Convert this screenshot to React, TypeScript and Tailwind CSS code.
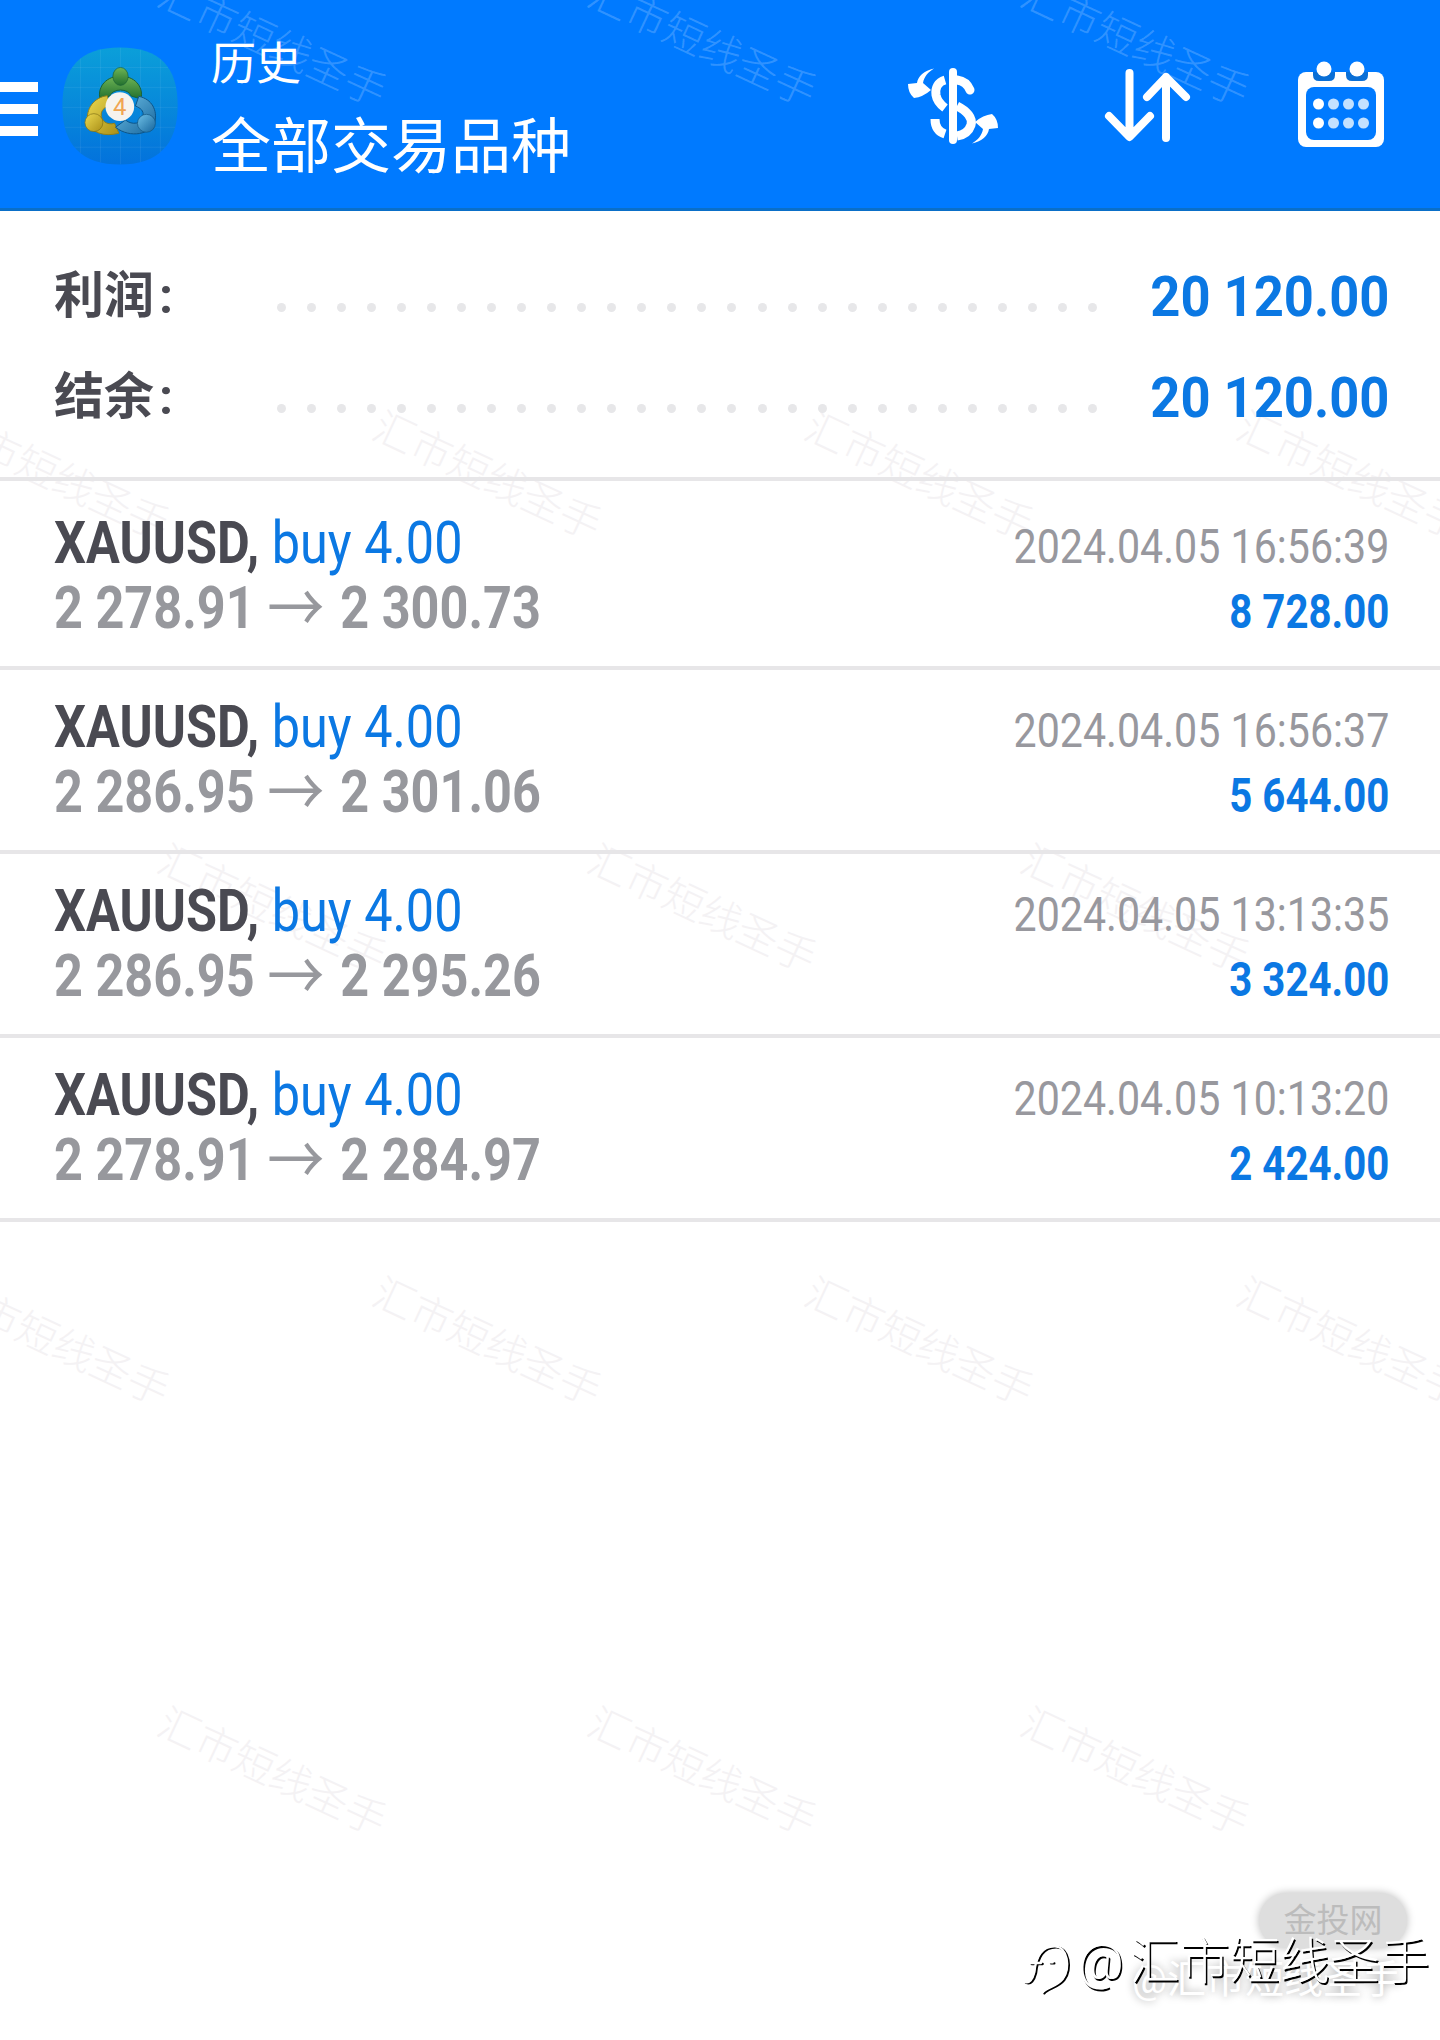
import React from 'react';

const trades = [
  { open: '2 278.91', close: '2 300.73', time: '2024.04.05 16:56:39', profit: '8 728.00' },
  { open: '2 286.95', close: '2 301.06', time: '2024.04.05 16:56:37', profit: '5 644.00' },
  { open: '2 286.95', close: '2 295.26', time: '2024.04.05 13:13:35', profit: '3 324.00' },
  { open: '2 278.91', close: '2 284.97', time: '2024.04.05 10:13:20', profit: '2 424.00' }
];

const summary = [
  { label: '利润', value: '20 120.00' },
  { label: '结余', value: '20 120.00' }
];

// centre points of the repeated watermark
const marks = [
  [272, 44], [702, 44], [1135, 44],
  [55, 477], [487, 477], [919, 477], [1351, 477],
  [272, 910], [702, 910], [1135, 910],
  [55, 1343], [487, 1343], [919, 1343], [1351, 1343],
  [272, 1773], [702, 1773], [1135, 1773]
];

function Watermarks({ className }: { className: string }) {
  return (
    <div className={`absolute inset-0 overflow-hidden pointer-events-none ${className}`}>
      {marks.map(([x, y]) => (
        <span
          key={`${x}-${y}`}
          className="absolute -translate-x-1/2 -translate-y-1/2 rotate-[25deg] whitespace-nowrap text-[41px] leading-none font-light"
          style={{ left: x, top: y }}
        >
          汇市短线圣手
        </span>
      ))}
    </div>
  );
}

function Mt4Logo() {
  const grid = [110, 170, 230, 290, 350];
  return (
    <svg width="116" height="118" viewBox="64 49 349 354" className="shrink-0">
      <defs>
        <linearGradient id="tile" x1="0" y1="0" x2="0" y2="1">
          <stop offset="0" stopColor="#0b9fd9" />
          <stop offset="1" stopColor="#0372dc" />
        </linearGradient>
        <linearGradient id="green" x1="0" y1="0" x2="0" y2="1">
          <stop offset="0" stopColor="#6fb555" />
          <stop offset="1" stopColor="#22702e" />
        </linearGradient>
        <linearGradient id="gold" x1="0" y1="0" x2="1" y2="1">
          <stop offset="0" stopColor="#ecd94f" />
          <stop offset="1" stopColor="#a98f18" />
        </linearGradient>
        <linearGradient id="sky" x1="0" y1="0" x2="1" y2="1">
          <stop offset="0" stopColor="#6fc0e6" />
          <stop offset="1" stopColor="#15649c" />
        </linearGradient>
        <clipPath id="tileClip">
          <path d="M238 50C360 50 412 110 412 225C412 345 350 402 238 402C125 402 65 345 65 225C65 110 120 50 238 50Z" />
        </clipPath>
      </defs>
      <path d="M238 50C360 50 412 110 412 225C412 345 350 402 238 402C125 402 65 345 65 225C65 110 120 50 238 50Z" fill="url(#tile)" />
      <g clipPath="url(#tileClip)" stroke="#ffffff" strokeOpacity="0.1" strokeWidth="2">
        {grid.map((v) => (
          <path key={v} d={`M${v + 10} 40V410M60 ${v}H420`} />
        ))}
      </g>
      <path d="M178 205C170 165 200 136 240 136C280 136 310 165 302 205L272 196C264 172 216 172 208 196Z" fill="url(#green)" stroke="#1a6136" strokeWidth="3" />
      <ellipse cx="240" cy="137" rx="23" ry="27" fill="url(#green)" stroke="#1a6136" strokeWidth="2" />
      <path d="M200 195C160 200 134 235 142 275C150 305 190 320 235 308L222 278C200 285 180 270 182 250C184 235 195 228 210 225Z" fill="url(#gold)" stroke="#8f7f1c" strokeWidth="3" />
      <circle cx="160" cy="276" r="27" fill="url(#gold)" stroke="#7f6f14" strokeWidth="2" />
      <path d="M295 197C335 205 352 240 343 275C332 310 270 325 225 290L255 268C275 285 305 280 308 255C310 240 300 232 285 226Z" fill="url(#sky)" stroke="#0d5488" strokeWidth="3" />
      <circle cx="318" cy="278" r="27" fill="url(#sky)" stroke="#10537f" strokeWidth="2" />
      <circle cx="238" cy="228" r="43" fill="#f6f3ee" />
      <text x="238" y="254" textAnchor="middle" fontSize="72" fontFamily="Roboto, sans-serif" fill="#f0a552">4</text>
    </svg>
  );
}

function DollarIcon() {
  const arrow = 'M27 .5C17 3 11 8 10 15L1 16Q1 25 7 30Q16 29 24 22L16 15C17 9 21 4 27 .5Z';
  return (
    <svg width="92" height="76" viewBox="0 0 92 76" fill="none" className="mt-1">
      <rect x="42" y="0" width="8" height="76" rx="4" fill="#ffffff" />
      <g stroke="#ffffff" strokeWidth="9" strokeLinecap="round">
        <path d="M50 12C57 13 61 17 63 22" />
        <path d="M38 12C31 14 28 20 29 27C30 33 34 37 38 40" strokeLinecap="butt" />
        <path d="M50 38C60 43 66 50 64 57C62 63 57 67 50 68" strokeLinecap="butt" />
        <path d="M28 51C28 59 32 64 38 66" strokeLinecap="butt" />
      </g>
      <path d={arrow} fill="#ffffff" />
      <path d={arrow} fill="#ffffff" transform="rotate(180 46 38)" />
    </svg>
  );
}

function SortIcon() {
  return (
    <svg width="90" height="76" viewBox="-4 -4 90 76" fill="none" stroke="#ffffff" strokeWidth="8" strokeLinecap="round" strokeLinejoin="round" className="mt-1">
      <path d="M22.5 1V64M2 44L22.5 65L43 44" />
      <path d="M59 66V5M40 25L59 5L79 25" />
    </svg>
  );
}

function CalendarIcon() {
  return (
    <svg width="86" height="86" viewBox="0 0 86 86">
      <rect x="0" y="11" width="86" height="75" rx="8" fill="#ffffff" />
      <rect x="8" y="26" width="70" height="53" rx="8" fill="#007aff" />
      <path d="M15 11H37V14Q37 20 31 20H21Q15 20 15 14Z" fill="#0a6fd6" />
      <path d="M48 11H70V14Q70 20 64 20H54Q48 20 48 14Z" fill="#0a6fd6" />
      <circle cx="26" cy="8" r="7.5" fill="#ffffff" />
      <circle cx="59" cy="8" r="7.5" fill="#ffffff" />
      {[43, 62].map((cy) =>
        [20.5, 35.5, 50.5, 65.5].map((cx) => (
          <circle key={`${cx}-${cy}`} cx={cx} cy={cy} r="5.5" fill={cx === 20.5 ? '#ffffff' : '#c3e1ff'} />
        ))
      )}
    </svg>
  );
}

function AppMark() {
  const d = 'M165 262C130 262 110 290 105 340C100 360 90 375 75 368M92 312H125M150 310H160M165 262C205 260 215 330 190 360C170 385 140 385 130 400';
  return (
    <svg width="80" height="70" viewBox="60 240 240 210" fill="none" className="absolute left-[1021px] top-[1940px]">
      <path d={d} stroke="#000000" strokeWidth="7" strokeLinecap="round" />
      <path d={d} stroke="#ffffff" strokeWidth="7" strokeLinecap="round" transform="translate(-5 -3)" />
    </svg>
  );
}

export default function App() {
  return (
    <div className="relative w-[1440px] h-[2040px] overflow-hidden bg-white font-['Roboto','Noto_Sans_CJK_SC',sans-serif]">
      {/* Watermark under the list */}
      <Watermarks className="text-[#f4f2f4]" />

      {/* Header */}
      <header className="relative h-[211px] overflow-hidden bg-[#007aff] border-b-[3px] border-[#0a6fc8] flex items-center text-white">
        <Watermarks className="text-white/20" />
        <div className="relative flex flex-col gap-3 w-[38px] shrink-0 mt-[9px]">
          <div className="h-[10px] bg-white" />
          <div className="h-[10px] bg-white" />
          <div className="h-[10px] bg-white" />
        </div>
        <div className="relative ml-[24px] mt-[3px]">
          <Mt4Logo />
        </div>
        <div className="relative ml-[33px] flex flex-col mt-[14px]">
          <div className="text-[45px] leading-[60px]">历史</div>
          <div className="text-[60px] leading-[80px] mt-[13px] whitespace-nowrap">全部交易品种</div>
        </div>
        <div className="relative ml-auto flex items-center pr-[56px]">
          <DollarIcon />
          <div className="ml-[104px]"><SortIcon /></div>
          <div className="ml-[105px]"><CalendarIcon /></div>
        </div>
      </header>

      {/* Totals */}
      <section className="relative h-[270px] pt-[35px] border-b-4 border-[#e7e6e8]">
        {summary.map((row) => (
          <div key={row.label} className="flex items-center h-[101px] pl-[54px] pr-[50px]">
            <div className="w-[223px] shrink-0 text-[50px] font-bold text-[#4a4a52]">
              {row.label}
              <span className="ml-[5px]">:</span>
            </div>
            <div className="w-[820px] shrink-0 flex justify-between mt-[22px]">
              {Array.from({ length: 28 }).map((_, i) => (
                <span key={i} className="w-[9px] h-[9px] rounded-full bg-[#e7e7e9]" />
              ))}
            </div>
            <div className="ml-auto mt-[2px] whitespace-nowrap origin-right scale-x-[0.955] text-[55px] font-bold text-[#0b78e3]">{row.value}</div>
          </div>
        ))}
      </section>

      {/* Closed trades */}
      <div className="relative pt-[5px]">
        {trades.map((t) => (
          <div key={t.time} className="h-[184px] border-b-4 border-[#e7e6e8] flex justify-between pl-[54px] pr-[51px]">
            <div className="pt-[24px] text-[60px] leading-[65px] whitespace-nowrap">
              <div className="origin-left scale-x-[0.84]">
                <span className="font-bold text-[#4a4a52]">XAUUSD, </span>
                <span className="text-[#0b78e3]">buy 4.00</span>
              </div>
              <div className="origin-left scale-x-[0.84] font-bold text-[#97989d]">
                {t.open}{' '}
                <span className="inline-block h-[40px] leading-[40px] mr-[4px] text-[68px] font-normal translate-y-[5px]">→</span>{' '}
                {t.close}
              </div>
            </div>
            <div className="pt-[28px] text-[49px] leading-[65px] whitespace-nowrap text-right">
              <div className="origin-right scale-x-[0.84] text-[#98989e]">{t.time}</div>
              <div className="origin-right scale-x-[0.82] font-bold text-[#0b78e3]">{t.profit}</div>
            </div>
          </div>
        ))}
      </div>

      {/* Reposted-image stamps in the corner */}
      <div className="absolute left-[1259px] top-[1893px] w-[148px] h-[55px] rounded-full bg-[#dedede] shadow-[0_0_8px_#bbbbbb] text-[33px] leading-[56px] text-center text-[#bcbcbc]">
        金投网
      </div>
      <div className="absolute left-[1132px] top-[1954px] text-[39px] leading-[52px] whitespace-nowrap text-white [text-shadow:0_0_8px_#a0a0a0]">
        @汇市短线圣手
      </div>
      <AppMark />
      <div className="absolute left-[1078px] top-[1928px] text-[50px] leading-[68px] font-light whitespace-nowrap text-white [text-shadow:1.5px_1.5px_0_#000000]">
        @<span className="ml-[6px]">汇市短线圣手</span>
      </div>
    </div>
  );
}
